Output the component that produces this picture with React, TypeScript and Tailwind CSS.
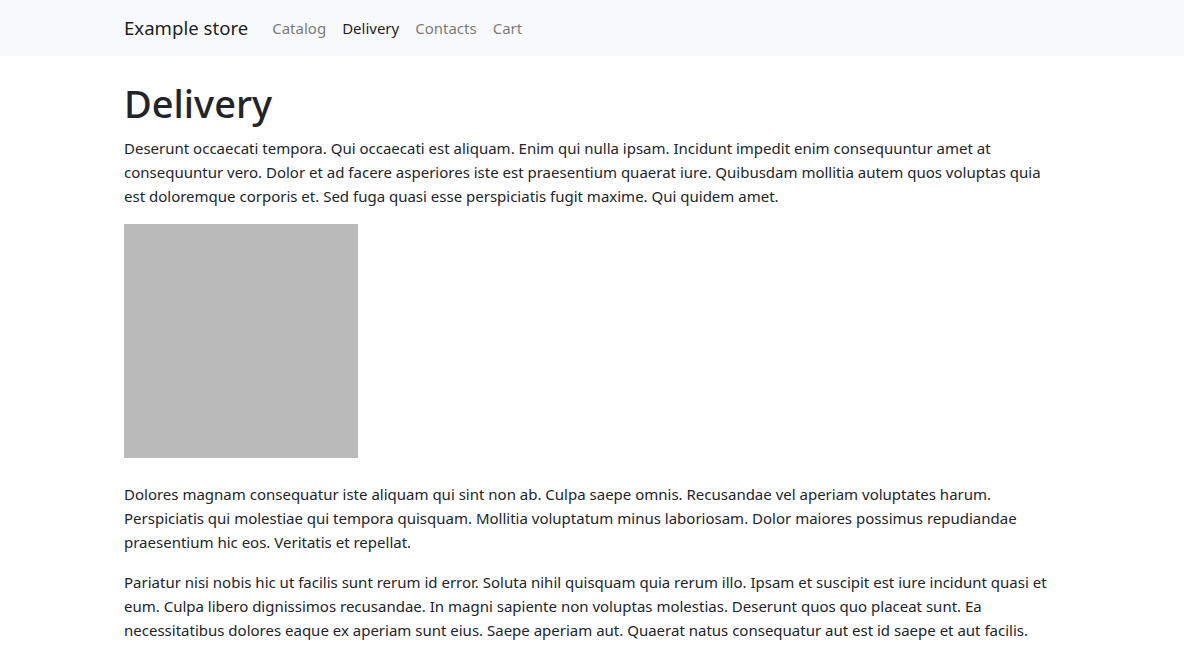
import React from "react";

const font = { fontFamily: '"Noto Sans", "Open Sans", sans-serif' };

export default function App() {
  return (
    <div className="min-h-screen bg-white text-[#212529]" style={font}>
      <nav className="bg-[#f8f9fa] py-2">
        <div className="mx-auto flex w-[960px] items-center px-3">
          <a className="mr-4 py-[5px] text-[18.6px] leading-[30px] text-[rgba(0,0,0,0.9)]" href="#">
            Example store
          </a>
          <ul className="flex">
            <li>
              <a className="block px-2 py-2 text-[15px] leading-6 text-[rgba(0,0,0,0.55)]" href="#">
                Catalog
              </a>
            </li>
            <li>
              <a className="block px-2 py-2 text-[15px] leading-6 text-[rgba(0,0,0,0.9)]" href="#">
                Delivery
              </a>
            </li>
            <li>
              <a className="block px-2 py-2 text-[15px] leading-6 text-[rgba(0,0,0,0.55)]" href="#">
                Contacts
              </a>
            </li>
            <li>
              <a className="block px-2 py-2 text-[15px] leading-6 text-[rgba(0,0,0,0.55)]" href="#">
                Cart
              </a>
            </li>
          </ul>
        </div>
      </nav>
      <main className="mx-auto mt-6 w-[960px] px-3 text-[15px] leading-6">
        <h1 className="mb-2 text-[38px] font-medium leading-[1.25]">Delivery</h1>
        <p className="mb-4">
          Deserunt occaecati tempora. Qui occaecati est aliquam. Enim qui nulla ipsam. Incidunt impedit enim consequuntur amet at
          consequuntur vero. Dolor et ad facere asperiores iste est praesentium quaerat iure. Quibusdam mollitia autem quos voluptas quia
          est doloremque corporis et. Sed fuga quasi esse perspiciatis fugit maxime. Qui quidem amet.
        </p>
        <div className="mb-6 h-[234px] w-[234px] bg-[#bababa]" />
        <p className="mb-4">
          Dolores magnam consequatur iste aliquam qui sint non ab. Culpa saepe omnis. Recusandae vel aperiam voluptates harum.
          Perspiciatis qui molestiae qui tempora quisquam. Mollitia voluptatum minus laboriosam. Dolor maiores possimus repudiandae
          praesentium hic eos. Veritatis et repellat.
        </p>
        <p className="mb-4">
          Pariatur nisi nobis hic ut facilis sunt rerum id error. Soluta nihil quisquam quia rerum illo. Ipsam et suscipit est iure incidunt quasi et
          eum. Culpa libero dignissimos recusandae. In magni sapiente non voluptas molestias. Deserunt quos quo placeat sunt. Ea
          necessitatibus dolores eaque ex aperiam sunt eius. Saepe aperiam aut. Quaerat natus consequatur aut est id saepe et aut facilis.
        </p>
      </main>
    </div>
  );
}
